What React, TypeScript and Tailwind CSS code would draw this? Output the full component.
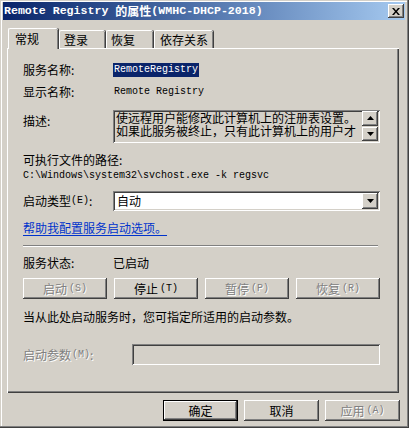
import React from "react";

const raised =
  "shadow-[inset_-1px_-1px_0_#404040,inset_1px_1px_0_#ffffff,inset_-2px_-2px_0_#808080,inset_2px_2px_0_#d4d0c8]";
const sunken =
  "shadow-[inset_1px_1px_0_#808080,inset_-1px_-1px_0_#ffffff,inset_2px_2px_0_#404040,inset_-2px_-2px_0_#d4d0c8]";

function Mono({ children, className = "" }: { children: React.ReactNode; className?: string }) {
  return <span className={"font-['Liberation_Mono',monospace] text-[10px] " + className}>{children}</span>;
}

function Btn({ label, hot, disabled, w = "w-[84px]" }: { label: string; hot?: string; disabled?: boolean; w?: string }) {
  return (
    <div
      className={`${w} h-[21px] bg-[#d4d0c8] ${raised} flex items-center justify-center ${
        disabled ? "text-[#808080] [text-shadow:1px_1px_0_#ffffff]" : "text-black"
      }`}
    >
      <span>{label}</span>
      {hot && <Mono className="ml-[2px]">({hot})</Mono>}
    </div>
  );
}

function Arrow({ up }: { up?: boolean }) {
  return (
    <svg width="7" height="4" viewBox="0 0 7 4">
      {up ? <polygon points="3.5,0 7,4 0,4" fill="#000" /> : <polygon points="0,0 7,0 3.5,4" fill="#000" />}
    </svg>
  );
}

export default function App() {
  return (
    <div className="w-[409px] h-[428px] bg-[#d4d0c8] pt-[2px] pl-[3px] pr-[4px] font-['Noto_Sans_CJK_SC',sans-serif] text-[12px] leading-[12px] text-black shadow-[inset_-1px_-1px_0_#404040,inset_-2px_-2px_0_#808080,inset_1px_1px_0_#d4d0c8,inset_2px_2px_0_#ffffff] overflow-hidden">
      {/* Title bar */}
      <div className="h-[18px] flex items-center bg-linear-to-r from-[#0a246a] to-[#a6caf0] pl-[1px] text-white">
        <span className="font-['Liberation_Mono',monospace] font-bold text-[11.6px] leading-[12px] whitespace-pre">Remote Registry </span>
        <span className="font-bold">的属性</span>
        <span className="font-['Liberation_Mono',monospace] font-bold text-[11.6px] leading-[12px]">(WMHC-DHCP-2018)</span>
        <div className={`ml-auto mr-[1px] w-[16px] h-[14px] bg-[#d4d0c8] ${raised} flex items-center justify-center`}>
          <svg width="8" height="7" viewBox="0 0 8 7">
            <path d="M0 0h2l2 2.5L6 0h2L5 3.5 8 7H6L4 4.5 2 7H0l3-3.5z" fill="#000" />
          </svg>
        </div>
      </div>

      {/* Tabs */}
      <div className="mt-[8px] ml-[5px] h-[20px] flex items-end gap-[1px] relative z-10">
        <div className="w-[50px] h-[21px] -mb-[1px] bg-[#d4d0c8] border-l border-t border-white rounded-tl-[2px] rounded-tr-[2px] shadow-[inset_-1px_0_0_#808080,1px_0_0_#404040] pl-[6px] pt-[4px]">
          常规
        </div>
        <div className="w-[46px] h-[18px] bg-[#d4d0c8] border-l border-t border-white rounded-tl-[2px] rounded-tr-[2px] shadow-[inset_-1px_0_0_#808080,1px_0_0_#404040] pl-[4px] pt-[3px]">
          登录
        </div>
        <div className="w-[47px] h-[18px] bg-[#d4d0c8] border-l border-t border-white rounded-tl-[2px] rounded-tr-[2px] shadow-[inset_-1px_0_0_#808080,1px_0_0_#404040] pl-[4px] pt-[3px]">
          恢复
        </div>
        <div className="w-[59px] h-[18px] bg-[#d4d0c8] border-l border-t border-white rounded-tl-[2px] rounded-tr-[2px] shadow-[inset_-1px_0_0_#808080,1px_0_0_#404040] pl-[5px] pt-[3px]">
          依存关系
        </div>
      </div>

      {/* Panel */}
      <div className="ml-[4px] w-[392px] h-[345px] bg-[#d4d0c8] shadow-[inset_1px_1px_0_#ffffff,inset_-1px_-1px_0_#404040,inset_-2px_-2px_0_#808080] pl-[16px] pt-[15px] flex flex-col">
        <div className="h-[14px] flex items-center">
          <div className="w-[90px]">服务名称:</div>
          <div className="h-[14px] bg-[#0a246a] text-white flex items-center px-[1px]">
            <Mono>RemoteRegistry</Mono>
          </div>
        </div>
        <div className="mt-[8px] h-[14px] flex items-center">
          <div className="w-[90px]">显示名称:</div>
          <Mono className="pl-[1px]">Remote Registry</Mono>
        </div>
        <div className="mt-[11px] flex items-start">
          <div className="w-[90px] pt-[5px]">描述:</div>
          <div className={`w-[267px] h-[33px] ${sunken} flex p-[2px]`}>
            <div className="flex-1 pl-[1px] leading-[13px] -mt-[1px]">
              <div>使远程用户能修改此计算机上的注册表设置。</div>
              <div>如果此服务被终止，只有此计算机上的用户才</div>
            </div>
            <div className="w-[16px] flex flex-col gap-[1px] -mt-[1px]">
              <div className={`h-[15px] bg-[#d4d0c8] ${raised} flex items-center justify-center`}>
                <Arrow up />
              </div>
              <div className={`h-[15px] bg-[#d4d0c8] ${raised} flex items-center justify-center`}>
                <Arrow />
              </div>
            </div>
          </div>
        </div>
        <div className="mt-[11px] h-[12px]">可执行文件的路径:</div>
        <div className="mt-[4px] h-[12px] flex items-center">
          <Mono>C:\Windows\system32\svchost.exe -k regsvc</Mono>
        </div>
        <div className="mt-[9px] flex items-center">
          <div className="w-[90px] flex items-center">
            启动类型<Mono>(E)</Mono>:
          </div>
          <div className={`w-[267px] h-[20px] bg-white ${sunken} flex items-center p-[2px]`}>
            <div className="flex-1 pl-[2px]">自动</div>
            <div className={`w-[16px] h-[16px] bg-[#d4d0c8] ${raised} flex items-center justify-center`}>
              <Arrow />
            </div>
          </div>
        </div>
        <div className="mt-[11px] h-[12px]">
          <span className="text-[#0033cc] underline underline-offset-[2px]">帮助我配置服务启动选项。</span>
        </div>
        <div className="mt-[11px] w-[355px] h-[2px] border-t border-b border-t-[#808080] border-b-white" />
        <div className="mt-[10px] h-[12px] flex items-center">
          <div className="w-[90px]">服务状态:</div>
          <div>已启动</div>
        </div>
        <div className="mt-[9px] w-[357px] flex justify-between">
          <Btn label="启动" hot="S" disabled />
          <Btn label="停止" hot="T" />
          <Btn label="暂停" hot="P" disabled />
          <Btn label="恢复" hot="R" disabled />
        </div>
        <div className="mt-[12px] h-[12px]">当从此处启动服务时，您可指定所适用的启动参数。</div>
        <div className="mt-[21px] flex items-center">
          <div className="w-[109px] text-[#808080] [text-shadow:1px_1px_0_#ffffff] flex items-center">
            启动参数<Mono className="ml-[1px]">(M)</Mono>:
          </div>
          <div className={`w-[248px] h-[21px] ${sunken}`} />
        </div>
      </div>

      {/* Bottom buttons */}
      <div className="mt-[7px] pr-[5px] flex justify-end gap-[6px]">
        <div className="w-[75px] h-[21px] bg-[#d4d0c8] shadow-[inset_0_0_0_1px_#000000,inset_-2px_-2px_0_#404040,inset_2px_2px_0_#ffffff,inset_-3px_-3px_0_#808080] flex items-center justify-center">
          确定
        </div>
        <Btn label="取消" w="w-[75px]" />
        <Btn label="应用" hot="A" disabled w="w-[75px]" />
      </div>
    </div>
  );
}
